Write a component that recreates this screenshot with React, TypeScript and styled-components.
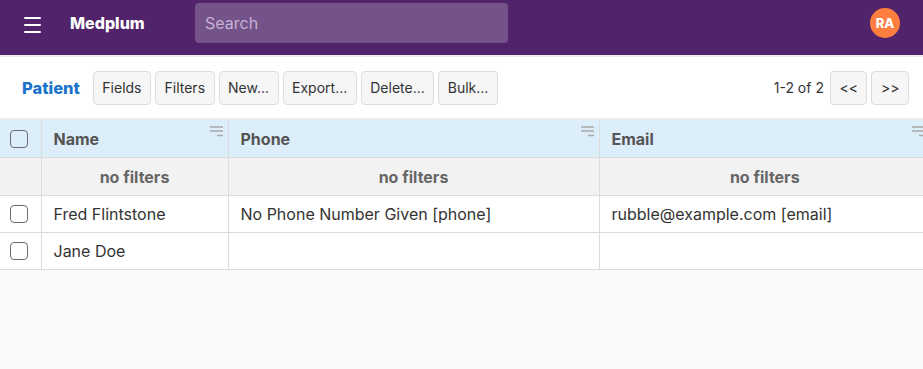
import React from "react"
import styled, { createGlobalStyle } from "styled-components"

const GlobalStyle = createGlobalStyle`
  body {
    margin: 0;
    background: #f8f9fa;
    font-family: Inter, "Liberation Sans", Arial, sans-serif;
    color: #333;
  }
`

const TopBar = styled.header`
  height: 46px;
  background: #50236a;
  display: flex;
  align-items: center;
  padding: 0 23px 9px 24px;
  border-bottom: 2px solid #ececec;
`

const Burger = styled.button`
  width: 17px;
  height: 16px;
  padding: 0;
  border: 0;
  background: none;
  display: flex;
  flex-direction: column;
  justify-content: space-between;
  margin-top: 4px;
  span {
    display: block;
    height: 2px;
    background: #fff;
    border-radius: 1px;
  }
`

const Brand = styled.div`
  color: #fff;
  font-weight: 800;
  font-size: 16px;
  margin-left: 29px;
  width: 125px;
`

const Search = styled.input`
  width: 313px;
  height: 40px;
  box-sizing: border-box;
  border: 0;
  border-radius: 4px;
  background: #74528a;
  color: #fff;
  padding: 0 10px;
  font-size: 16px;
  font-family: inherit;
  outline: none;
  &::placeholder {
    color: #c7b3d4;
  }
`

const Spacer = styled.div`
  flex: 1;
`

const Avatar = styled.div`
  width: 30px;
  height: 30px;
  border-radius: 50%;
  background: #fd7e3f;
  color: #fff;
  font-weight: 800;
  font-size: 13px;
  display: flex;
  align-items: center;
  justify-content: center;
`

const Toolbar = styled.div`
  height: 61px;
  display: flex;
  align-items: center;
  padding: 0 14px 0 22px;
  background: #fff;
  border-bottom: 2px solid #ececec;
`

const Title = styled.div`
  color: #1a73c9;
  font-weight: 800;
  font-size: 16.5px;
  margin-right: 13px;
`

const Buttons = styled.div`
  display: flex;
  gap: 4px;
`

const Button = styled.button`
  height: 34px;
  padding: 0 8.5px;
  border: 1px solid #dcdcdc;
  border-radius: 4px;
  background: #f6f6f6;
  color: #333;
  font-size: 14px;
  font-family: inherit;
`

const Count = styled.span`
  font-size: 14px;
  color: #333;
  margin-right: 6px;
`

const TableWrap = styled.div`
  overflow: hidden;
  background: #fff;
`

const Table = styled.table`
  width: 931px;
  border-collapse: collapse;
  table-layout: fixed;
  font-size: 16px;
`

const HeadCell = styled.th`
  background: #ddeefb;
  border: 1px solid #dcdcdc;
  border-top: 0;
  height: 37px;
  padding: 0 12px;
  text-align: left;
  font-weight: 700;
  color: #555;
  position: relative;
  &:first-child {
    border-left: 0;
  }
`

const FilterCell = styled.th`
  background: #f2f2f2;
  border: 1px solid #dcdcdc;
  height: 35px;
  font-weight: 700;
  color: #666;
  &:first-child {
    border-left: 0;
  }
`

const Cell = styled.td`
  border: 1px solid #dcdcdc;
  height: 36px;
  padding: 0 12px;
  color: #333;
  &:first-child {
    border-left: 0;
  }
`

const CheckCell = styled(Cell)`
  padding: 0 0 0 10px;
`

const Box = styled.span`
  display: block;
  width: 16px;
  height: 16px;
  border: 1.5px solid #6c6c6c;
  border-radius: 4px;
`

const FilterIcon = styled.svg`
  position: absolute;
  right: 5px;
  top: 5px;
`

const SortLines = () => (
  <FilterIcon width="14" height="12" viewBox="0 0 14 12">
    <g stroke="#a7a7a7" strokeWidth="1.5">
      <line x1="1" y1="2" x2="14" y2="2" />
      <line x1="1" y1="6" x2="14" y2="6" />
      <line x1="8" y1="10.5" x2="14" y2="10.5" />
    </g>
  </FilterIcon>
)

const columns = ["Name", "Phone", "Email"]

const rows = [
  ["Fred Flintstone", "No Phone Number Given [phone]", "rubble@example.com [email]"],
  ["Jane Doe", "", ""],
]

export default function App() {
  return (
    <>
      <GlobalStyle />
      <TopBar>
        <Burger>
          <span />
          <span />
          <span />
        </Burger>
        <Brand>Medplum</Brand>
        <Search placeholder="Search" />
        <Spacer />
        <Avatar>RA</Avatar>
      </TopBar>
      <Toolbar>
        <Title>Patient</Title>
        <Buttons>
          {["Fields", "Filters", "New...", "Export...", "Delete...", "Bulk..."].map(b => (
            <Button key={b}>{b}</Button>
          ))}
        </Buttons>
        <Spacer />
        <Count>1-2 of 2</Count>
        <Buttons>
          <Button>&lt;&lt;</Button>
          <Button>&gt;&gt;</Button>
        </Buttons>
      </Toolbar>
      <TableWrap>
        <Table>
          <colgroup>
            <col style={{ width: 41 }} />
            <col style={{ width: 187 }} />
            <col style={{ width: 371 }} />
            <col />
          </colgroup>
          <thead>
            <tr>
              <HeadCell style={{ padding: "0 0 0 10px" }}>
                <Box />
              </HeadCell>
              {columns.map(c => (
                <HeadCell key={c}>
                  {c}
                  <SortLines />
                </HeadCell>
              ))}
            </tr>
            <tr>
              <FilterCell />
              {columns.map(c => (
                <FilterCell key={c}>no filters</FilterCell>
              ))}
            </tr>
          </thead>
          <tbody>
            {rows.map(r => (
              <tr key={r[0]}>
                <CheckCell>
                  <Box />
                </CheckCell>
                {r.map((v, i) => (
                  <Cell key={i}>{v}</Cell>
                ))}
              </tr>
            ))}
          </tbody>
        </Table>
      </TableWrap>
    </>
  )
}
